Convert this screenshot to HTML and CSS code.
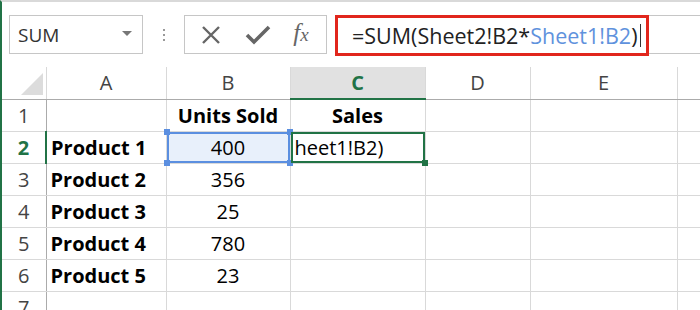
FILE: index.html
```html
<!DOCTYPE html>
<html>
<head>
<meta charset="utf-8">
<link rel="stylesheet" href="styles.css">
</head>
<body>
<div class="app">
  <div class="toolbar">
    <div class="namebox">
      <span class="name">SUM</span>
      <span class="caret"></span>
    </div>
    <div class="dots"><i></i><i></i><i></i></div>
    <div class="buttons">
      <svg class="ico" width="22" height="22" viewBox="0 0 22 22"><path d="M3 3 L19 19 M19 3 L3 19" stroke="#666" stroke-width="2.4" fill="none"/></svg>
      <svg class="ico" width="26" height="22" viewBox="0 0 26 22"><path d="M2 11 L9 18 L24 3" stroke="#666" stroke-width="3.6" fill="none"/></svg>
      <span class="fx">f<span class="x">x</span></span>
    </div>
    <div class="formula">
      <div class="redbox"><span class="ftext">=SUM(Sheet2!B2*<span class="ref">Sheet1!B2</span>)</span><span class="cursor"></span></div>
      <div class="rest"></div>
    </div>
  </div>
  <table class="grid">
    <colgroup>
      <col class="c0"><col class="ca"><col class="cb"><col class="cc"><col class="cd"><col class="ce"><col class="cf">
    </colgroup>
    <tr class="head">
      <th class="corner"><span class="tri"></span></th>
      <th>A</th><th>B</th><th class="active">C</th><th>D</th><th>E</th><th></th>
    </tr>
    <tr><th class="rh">1</th><td></td><td class="bold center">Units Sold</td><td class="bold center">Sales</td><td></td><td></td><td></td></tr>
    <tr><th class="rh activer">2</th><td class="bold">Product 1</td><td class="center selb">400<span class="h tl"></span><span class="h tr"></span><span class="h bl"></span><span class="h br"></span></td><td class="selc">heet1!B2)<span class="h gbr"></span></td><td></td><td></td><td></td></tr>
    <tr><th class="rh">3</th><td class="bold">Product 2</td><td class="center dl">356</td><td></td><td></td><td></td><td></td></tr>
    <tr><th class="rh">4</th><td class="bold">Product 3</td><td class="center dl">25</td><td></td><td></td><td></td><td></td></tr>
    <tr><th class="rh">5</th><td class="bold">Product 4</td><td class="center dl">780</td><td></td><td></td><td></td><td></td></tr>
    <tr><th class="rh">6</th><td class="bold">Product 5</td><td class="center dl">23</td><td></td><td></td><td></td><td></td></tr>
    <tr><th class="rh">7</th><td></td><td></td><td></td><td></td><td></td><td></td></tr>
  </table>
</div>
</body>
</html>
```
FILE: styles.css
```css
html, body {
  margin: 0;
  padding: 0;
  background: #fff;
}
body {
  width: 700px;
  height: 310px;
  overflow: hidden;
  font-family: "Open Sans", "Noto Sans", sans-serif;
}
.app {
  height: 308px;
  border-left: 2px solid #217346;
  border-top: 2px solid #d9d9d9;
  overflow: hidden;
}
.toolbar {
  display: flex;
  align-items: flex-start;
  padding-top: 13px;
  height: 41px;
}
.namebox {
  margin-left: 7px;
  border: 1px solid #c6c6c6;
  display: flex;
  align-items: center;
  justify-content: space-between;
  padding: 0 10px 0 8px;
  box-sizing: border-box;
  width: 134px;
  height: 39px;
}
.name {
  font-size: 19px;
  color: #333;
}
.caret {
  width: 0;
  height: 0;
  border-left: 5px solid transparent;
  border-right: 5px solid transparent;
  border-top: 5px solid #777;
  margin-bottom: 2px;
}
.dots {
  width: 41px;
  height: 39px;
  display: flex;
  flex-direction: column;
  align-items: center;
  justify-content: center;
  gap: 3px;
}
.dots i {
  display: block;
  width: 2px;
  height: 2px;
  background: #999;
}
.buttons {
  width: 143px;
  height: 39px;
  box-sizing: border-box;
  border: 1px solid #c6c6c6;
  display: flex;
  align-items: center;
  justify-content: space-around;
  padding: 0 6px 0 4px;
}
.fx {
  font-family: "Liberation Serif", "DejaVu Serif", serif;
  font-style: italic;
  font-size: 25px;
  color: #666;
  line-height: 1;
  margin-top: -4px;
}
.fx .x {
  font-size: 19px;
}
.formula {
  flex: 1;
  display: flex;
  margin-left: 8px;
}
.redbox {
  width: 314px;
  height: 41px;
  box-sizing: border-box;
  border: 3px solid #e1261c;
  display: flex;
  align-items: center;
  padding-left: 14px;
}
.ftext {
  font-size: 21.5px;
  color: #222;
  white-space: nowrap;
}
.ref {
  color: #5f92dd;
}
.cursor {
  width: 1px;
  height: 23px;
  background: #333;
  margin-left: 2px;
}
.rest {
  flex: 1;
  height: 39px;
  box-sizing: border-box;
  border-top: 1px solid #c6c6c6;
  border-bottom: 1px solid #c6c6c6;
}
.grid {
  margin-top: 11px;
  border-collapse: collapse;
  table-layout: fixed;
  width: 700px;
  font-size: 20px;
  color: #000;
}
.c0 { width: 44px; }
.ca { width: 120px; }
.cb { width: 124px; }
.cc { width: 135px; }
.cd { width: 105px; }
.ce { width: 147px; }
.cf { width: 25px; }
.grid tr {
  height: 32px;
}
.grid td, .grid th {
  border: 1px solid #d9d9d9;
  padding: 0 4px;
  white-space: nowrap;
  overflow: visible;
  position: relative;
}
.head th {
  border-top: none;
  border-bottom: 1px solid #ababab;
  font-weight: normal;
  font-size: 20px;
  color: #444;
  text-align: center;
  height: 31px;
}
.head th.active {
  background: #e1e1e1;
  color: #217346;
  font-weight: bold;
  border-bottom: 2px solid #217346;
}
.corner {
  border-left: none !important;
}
.tri {
  position: absolute;
  right: 3px;
  bottom: 4px;
  width: 0;
  height: 0;
  border-left: 22px solid transparent;
  border-bottom: 22px solid #dcdcdc;
}
.rh {
  font-weight: normal;
  font-size: 20px;
  color: #444;
  text-align: center;
  border-left: none !important;
  border-right: 1px solid #ababab !important;
  padding: 0;
}
.rh.activer {
  color: #217346;
  font-weight: bold;
  border-right: 2px solid #217346 !important;
}
.bold {
  font-weight: bold;
}
.center {
  text-align: center;
}
.dl {
  border-left: 1px solid #333 !important;
}
.selb {
  background: #e8f0fb;
  box-shadow: inset 0 0 0 2px #5b8fe0;
}
.selc {
  box-shadow: inset 0 0 0 2px #217346;
}
.h {
  position: absolute;
  width: 6px;
  height: 6px;
  background: #5b8fe0;
}
.tl { left: -3px; top: -3px; }
.tr { right: -3px; top: -3px; }
.bl { left: -3px; bottom: -3px; }
.br { right: -3px; bottom: -3px; }
.gbr {
  right: -3px;
  bottom: -3px;
  background: #217346;
}
```
